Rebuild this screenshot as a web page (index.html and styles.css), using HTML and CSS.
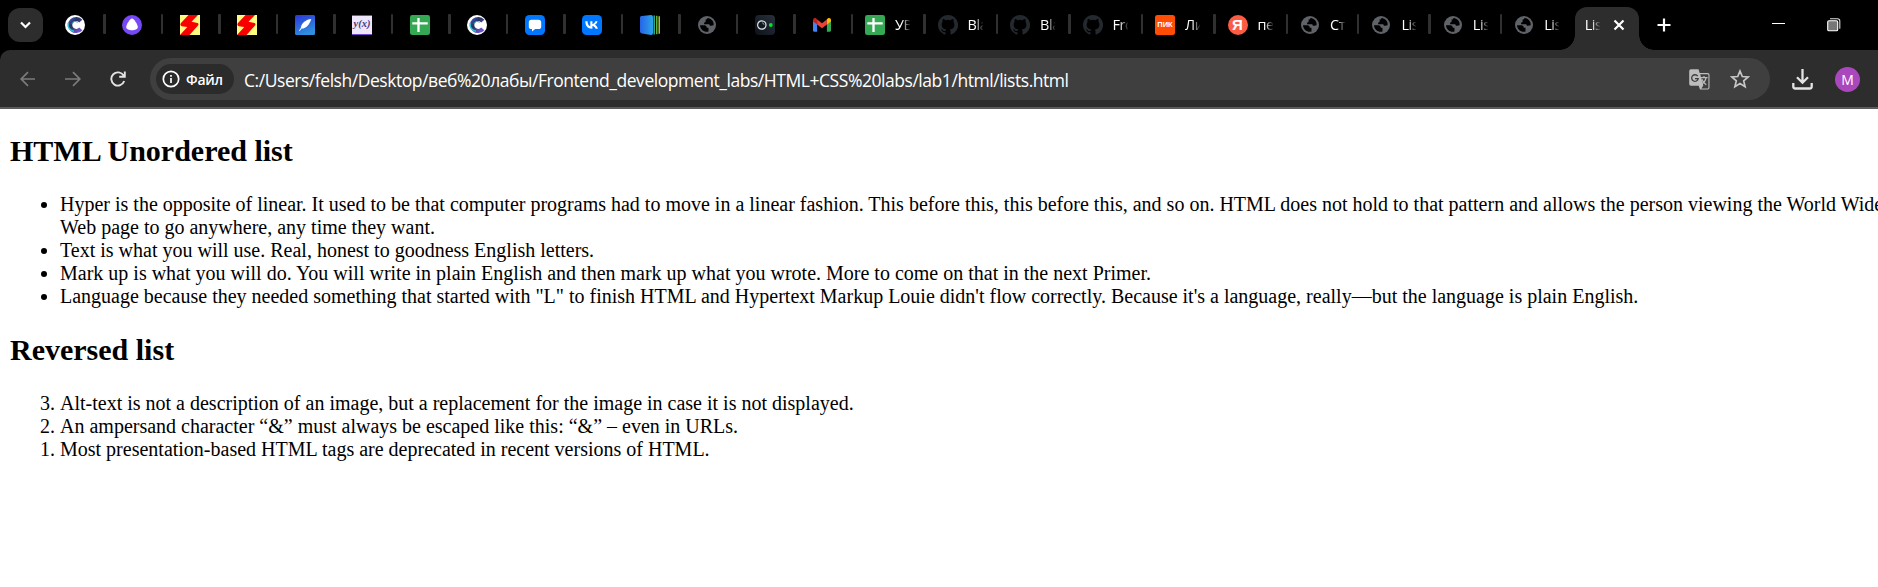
FILE: index.html
```html
<!DOCTYPE html>
<html lang="ru">
<head>
<meta charset="utf-8">
<title>Lists</title>
<link rel="stylesheet" href="styles.css">
</head>
<body>
<svg class="defs" aria-hidden="true">
  <defs>
    <linearGradient id="cg" x1="0" y1="0" x2="1" y2="1"><stop offset="0" stop-color="#3f4fae"/><stop offset=".35" stop-color="#27345f"/><stop offset=".7" stop-color="#564aa8"/><stop offset="1" stop-color="#7a55d8"/></linearGradient>
    <linearGradient id="feather" x1="0" y1="0" x2=".4" y2="1"><stop offset="0" stop-color="#2d35d8"/><stop offset="1" stop-color="#2e8edf"/></linearGradient>
    <linearGradient id="book" x1="0" y1="0" x2="1" y2="0"><stop offset="0" stop-color="#2864e8"/><stop offset="1" stop-color="#2ba4e8"/></linearGradient>
    <linearGradient id="cam" x1="0" y1="1" x2="1" y2="0"><stop offset="0" stop-color="#0d1119"/><stop offset="1" stop-color="#27323c"/></linearGradient>
  </defs>
  <symbol id="c-logo" viewBox="0 0 20 20"><circle cx="10" cy="10" r="10" fill="#fff"/><path d="M15.800 6.200A6 6 0 1 0 15.800 13.800" fill="none" stroke="url(#cg)" stroke-width="4.200"/><path d="M3.200 8A6.800 6.800 0 0 0 9 16.300" fill="none" stroke="#30c8d6" stroke-width="1.500"/><path d="M7 9a3.200 3.200 0 0 1 5.500-1.500" fill="none" stroke="#2fb5c8" stroke-width="1"/></symbol>
  <symbol id="alice" viewBox="0 0 20 20"><circle cx="10" cy="10" r="10" fill="#7748f5"/><path d="M10 3.600c2 0 5.800 6.200 5.800 8.500 0 2.500-3 3.200-5.800 3.200s-5.800-.7-5.800-3.200C4.200 9.800 8 3.600 10 3.600Z" fill="#fff"/></symbol>
  <symbol id="bolt" viewBox="0 0 20 20"><path fill="#fdfb80" d="M0 0h20v20H0z"/><path d="M8.500 0H18l-6.500 6.800 6 1.200q1.700.7.500 2.500L9.500 20H0l7.300-8-5.500-.8Q-.6 10.300 1 8Z" fill="#f80000"/></symbol>
  <symbol id="quill" viewBox="0 0 20 20"><rect width="20" height="20" rx="1.500" fill="url(#feather)"/><path d="M16.300 4c-5 .4-10 4-10.500 9L4 15.600l.7.4 2-2.400C11 13.800 14.600 9.500 16.300 4Z" fill="#fff"/></symbol>
  <symbol id="sheet" viewBox="0 0 20 20"><rect width="20" height="20" rx="2.300" fill="#34a853"/><path d="M2.300 8.300h15.400M8.500 3v14" stroke="#fff" stroke-width="2.300"/></symbol>
  <symbol id="chat" viewBox="0 0 20 20"><rect width="20" height="20" rx="4.500" fill="#07f"/><path d="M6.500 4.700h7a2.700 2.700 0 0 1 2.700 2.700v4a2.700 2.700 0 0 1-2.700 2.700h-3.300L7 16.400v-2.300h-.5a2.700 2.700 0 0 1-2.700-2.700v-4a2.700 2.700 0 0 1 2.700-2.700Z" fill="#fff"/></symbol>
  <symbol id="vk" viewBox="0 0 20 20"><rect width="20" height="20" rx="4.500" fill="#07f"/><path d="M3.300 6.200h2.200c.1 3.300 1.600 4.700 2.800 5V6.200h2.100V9c1.200-.1 2.500-1.400 3-2.800h2.100c-.4 1.700-1.600 3-2.600 3.600 1 .5 2.400 1.600 3 3.900H13.600c-.5-1.400-1.600-2.500-3.200-2.700v2.700H10.100C5.800 13.700 3.400 11 3.300 6.200Z" fill="#fff"/></symbol>
  <symbol id="books" viewBox="0 0 20 20"><path d="M0 2.500C0 1.300.8 1 2 .9L11 0q2 0 2 2v16q0 2-2 1.900L2 18.500Q0 18.200 0 16.500Z" fill="url(#book)"/><path d="M14.200.4v19.200" stroke="#35b890" stroke-width="1.400"/><path d="M16.800.7v18.600" stroke="#75cb48" stroke-width="1.300"/><path d="M19.200 1.200v17.600" stroke="#c4e63a" stroke-width="1.300"/></symbol>
  <symbol id="globe" viewBox="0 0 20 20"><circle cx="10" cy="10" r="9" fill="#5f6368"/><path d="M3 10.200h4.300c1.700 0 2.500 1 2.500 2.600h1.700v3.700c-4.200 1-8.200-1.800-8.500-6.300ZM10.500 3c-.3 1-.9 1.500-1.900 1.500v1.900c0 .7-.7 1-1.500 1v1.800h4.500c.9 0 1.200.7 1.200 1.500h1.200c1 0 1.700-.5 2.600-.5.600-3.600-2.300-7-6.100-7.200Z" fill="#000"/></symbol>
  <symbol id="camera" viewBox="0 0 20 20"><rect width="20" height="20" rx="4" fill="url(#cam)"/><circle cx="6.800" cy="10" r="4.200" fill="#111820" stroke="#dfe5e6" stroke-width="1.200"/><path d="M7 7.800a2 2 0 0 1 2 2" fill="none" stroke="#899"/><circle cx="15.800" cy="10" r="1.900" fill="#00e52c"/></symbol>
  <symbol id="gmail" viewBox="0 0 20 20"><path d="M1 5.500v10.100q0 1.100 1.100 1.100h3V8.500Z" fill="#4285f4"/><path d="M19 5.500v10.100q0 1.100-1.100 1.100h-3V8.500Z" fill="#34a853"/><path d="M14.900 4.500v5.100L19 6.500V5c0-2-2-2.600-3.300-1.600Z" fill="#fbbc04"/><path d="M5.100 9.600V4.500L10 8.200l4.900-3.700v5.100L10 13.300Z" fill="#ea4335"/><path d="M1 5v1.500l4.100 3.100V4.500l-.8-1.100C3 2.400 1 3 1 5Z" fill="#c5221f"/></symbol>
  <symbol id="github" viewBox="0 0 16 16"><path fill="#24292f" d="M8 0C3.580 0 0 3.580 0 8c0 3.540 2.290 6.530 5.470 7.590.4.070.55-.17.55-.38v-1.490c-2.010.37-2.530-.49-2.690-.94-.09-.23-.48-.94-.82-1.130-.28-.15-.68-.52-.01-.53.63-.01 1.080.58 1.230.82.72 1.210 1.870.87 2.330.66.070-.52.28-.87.51-1.070-1.780-.2-3.640-.89-3.640-3.950 0-.87.31-1.590.82-2.150-.08-.2-.36-1.020.08-2.120 0 0 .67-.21 2.200.82a7.600 7.600 0 0 1 4 0c1.530-1.040 2.200-.82 2.200-.82.44 1.100.16 1.920.08 2.120.51.56.82 1.270.82 2.150 0 3.070-1.870 3.750-3.650 3.950.29.25.54.73.54 1.480v2.200c0 .21.15.46.55.38A8 8 0 0 0 8 0Z"/></symbol>
</svg>

<header class="browser">
  <div class="tabstrip">
    <button class="tab-search"><svg viewBox="0 0 35 34"><path d="m13 14.500 4.500 4.500 4.500-4.500" fill="none" stroke="#fff" stroke-width="2.200"/></svg></button>
    <div class="tabs">
      <div class="tab"><svg><use href="#c-logo"/></svg></div>
      <div class="tab"><svg><use href="#alice"/></svg></div>
      <div class="tab"><svg><use href="#bolt"/></svg></div>
      <div class="tab"><svg><use href="#bolt"/></svg></div>
      <div class="tab"><svg><use href="#quill"/></svg></div>
      <div class="tab"><b class="favicon yx">y(x)</b></div>
      <div class="tab"><svg><use href="#sheet"/></svg></div>
      <div class="tab"><svg><use href="#c-logo"/></svg></div>
      <div class="tab"><svg><use href="#chat"/></svg></div>
      <div class="tab"><svg><use href="#vk"/></svg></div>
      <div class="tab"><svg><use href="#books"/></svg></div>
      <div class="tab"><svg><use href="#globe"/></svg></div>
      <div class="tab"><svg><use href="#camera"/></svg></div>
      <div class="tab"><svg><use href="#gmail"/></svg></div>
      <div class="tab wide"><svg><use href="#sheet"/></svg><span>УВ</span></div>
      <div class="tab wide"><svg><use href="#github"/></svg><span>Bla</span></div>
      <div class="tab wide"><svg><use href="#github"/></svg><span>Bla</span></div>
      <div class="tab wide"><svg><use href="#github"/></svg><span>Fro</span></div>
      <div class="tab wide"><b class="favicon pik">ПИК</b><span>Ли</span></div>
      <div class="tab wide"><b class="favicon ya">Я</b><span>пе</span></div>
      <div class="tab wide narrow"><svg><use href="#globe"/></svg><span>Ст</span></div>
      <div class="tab wide narrow"><svg><use href="#globe"/></svg><span>Lis</span></div>
      <div class="tab wide narrow"><svg><use href="#globe"/></svg><span>Lis</span></div>
      <div class="tab wide last"><svg><use href="#globe"/></svg><span>Lis</span></div>
    </div>
    <div class="tab-active"><span>Lis</span><svg viewBox="0 0 12 12"><path d="m1.500 1.500 9 9m0-9-9 9" stroke="#fff" stroke-width="2.200"/></svg></div>
    <svg class="new-tab" viewBox="0 0 14 14"><path d="M7 .5v13M.5 7h13" stroke="#fff" stroke-width="2.200"/></svg>
    <svg class="minimize" viewBox="0 0 13 14"><path d="M0 5.500h13" stroke="#fff"/></svg>
    <svg class="restore" viewBox="0 0 14 14"><rect x=".7" y="2.700" width="10" height="10" rx="1.300" fill="#777" stroke="#fff" stroke-width="1.100"/><path d="M3 .7h7.500a2.300 2.300 0 0 1 2.300 2.300v7.800" fill="none" stroke="#ddd" stroke-width="1.100"/></svg>
  </div>
  <div class="toolbar">
    <svg class="nav" viewBox="0 0 16 16"><path d="M15 8H1.500M8 1.200 1.200 8 8 14.800" fill="none" stroke="#7b7b7b" stroke-width="1.700"/></svg>
    <svg class="nav" viewBox="0 0 16 16"><path d="M0 8h14.500M8 1.200 14.800 8 8 14.800" fill="none" stroke="#7b7b7b" stroke-width="1.700"/></svg>
    <svg class="nav" viewBox="0 0 16 16"><path d="M14.200 10A6.600 6.600 0 1 1 13.600 4.600M14.800.5v5.300H9.200" fill="none" stroke="#e3e3e3" stroke-width="1.900"/></svg>
    <div class="omnibox">
      <div class="chip"><svg viewBox="0 0 18 18"><circle cx="9" cy="9" r="7.700" fill="none" stroke="#fff" stroke-width="1.700"/><path d="M9 8v5M9 5v1.700" stroke="#fff" stroke-width="1.700"/></svg><span>Файл</span></div>
      <span class="url">C:/Users/felsh/Desktop/веб%20лабы/Frontend_development_labs/HTML+CSS%20labs/lab1/html/lists.html</span>
      <svg class="translate" viewBox="0 0 21 21"><path d="M2 .2h7.500l1.200 3.900h8A1.800 1.800 0 0 1 20.500 6v12.800a1.800 1.800 0 0 1-1.800 1.800H11l-1.300-3.800H2A1.800 1.800 0 0 1 .2 15V2A1.800 1.800 0 0 1 2 .2Z" fill="#bdbdbd"/><path d="M11.200 5.300h7.600q.6 0 .6.700v12.700q0 .7-.7.700h-6.400l2-2.800Z" fill="#3f3f3f"/><path d="M8.700 7.200A3.300 3.300 0 1 0 9.200 9.700H6" fill="none" stroke="#3f3f3f" stroke-width="1.300"/><path d="M12 8.700h6.500M15 7v1.700m2 0c-.4 2.800-2 5-4.200 6.200m0-4.700c1.200 2.800 2.500 4.300 4.500 5.500" fill="none" stroke="#bdbdbd" stroke-width="1.200"/></svg>
      <svg class="star" viewBox="0 0 20 20"><path d="m10 2 2.300 5.500 5.900.5-4.500 3.900 1.400 5.800-5.100-3.100-5.100 3.100 1.400-5.800L1.800 8l5.900-.5Z" fill="none" stroke="#c7c7c7" stroke-width="1.700"/></svg>
    </div>
    <svg class="download" viewBox="0 0 21 21"><path d="M10.500 0v13M5 8.200l5.500 5.500L16 8.200M1.300 14v3.500a2 2 0 0 0 2 2h14.400a2 2 0 0 0 2-2V14" fill="none" stroke="#e3e3e3" stroke-width="2.300"/></svg>
    <div class="avatar">M</div>
  </div>
</header>

<main class="page">
  <h2>HTML Unordered list</h2>
  <ul>
    <li>Hyper is the opposite of linear. It used to be that computer programs had to move in a linear fashion. This before this, this before this, and so on. HTML does not hold to that pattern and allows the person viewing the World Wide Web page to go anywhere, any time they want.</li>
    <li>Text is what you will use. Real, honest to goodness English letters.</li>
    <li>Mark up is what you will do. You will write in plain English and then mark up what you wrote. More to come on that in the next Primer.</li>
    <li>Language because they needed something that started with "L" to finish HTML and Hypertext Markup Louie didn't flow correctly. Because it's a language, really—but the language is plain English.</li>
  </ul>
  <h2>Reversed list</h2>
  <ol reversed>
    <li>Alt-text is not a description of an image, but a replacement for the image in case it is not displayed.</li>
    <li>An ampersand character “&amp;” must always be escaped like this: “&amp;” – even in URLs.</li>
    <li>Most presentation-based HTML tags are deprecated in recent versions of HTML.</li>
  </ol>
</main>
</body>
</html>
```
FILE: styles.css
```css
* { box-sizing: border-box; }
body {
  margin: 0;
  height: 587px;
  overflow: hidden;
  background: #fff;
}
svg { display: block; flex: none; }
.defs { position: absolute; width: 0; height: 0; }

.browser {
  background: #000;
  color: #fff;
  font-family: "Open Sans", "Noto Sans", sans-serif;
}
.tabstrip {
  display: flex;
  align-items: center;
  height: 50px;
  padding-left: 8px;
}
.tab-search {
  width: 35px;
  height: 34px;
  padding: 0;
  border: 0;
  border-radius: 12px;
  background: #2d2d2d;
}
.tab-search svg { width: 35px; height: 34px; }
.tabs { display: flex; margin-left: 4px; }
.tab {
  display: flex;
  align-items: center;
  position: relative;
  width: 57.5px;
  height: 20px;
  padding-left: 17.5px;
}
.tab::after {
  content: "";
  position: absolute;
  right: -1px;
  top: -1px;
  width: 2.5px;
  height: 20px;
  border-radius: 1px;
  background: #303030;
}
.tab svg { width: 20px; height: 20px; }
.tab.wide { width: 72.5px; padding-left: 13px; }
.tab.narrow { width: 71.4px; }
.tab.last { width: 73.5px; }
.tab.last::after { display: none; }
.tab span, .tab-active span {
  width: 15px;
  overflow: hidden;
  white-space: nowrap;
  font-size: 14.5px;
  line-height: 20px;
  letter-spacing: -0.4px;
  -webkit-mask-image: linear-gradient(90deg, #000 45%, transparent 105%);
  mask-image: linear-gradient(90deg, #000 45%, transparent 105%);
}
.tab span { margin-left: 10px; }

.favicon {
  flex: none;
  width: 20px;
  height: 20px;
  text-align: center;
  white-space: nowrap;
}
.yx {
  border: solid #7445cf;
  border-width: 1px 0;
  background: #eee6fb;
  color: #4b3b78;
  font: italic bold 10.5px/16px "Liberation Serif", serif;
}
.pik {
  border-radius: 2.5px;
  background: #ff4d06;
  font: bold 7.5px/20px "Liberation Sans", sans-serif;
}
.ya {
  border-radius: 50%;
  background: #fc5c43;
  font: bold 15px/20px "Liberation Sans", sans-serif;
}

.tab-active {
  display: flex;
  align-items: center;
  align-self: flex-end;
  position: relative;
  width: 64px;
  height: 43px;
  padding: 0 0 7px 10px;
  border-radius: 12px 12px 0 0;
  background: #2d2d2d;
}
.tab-active::before, .tab-active::after {
  content: "";
  position: absolute;
  bottom: 0;
  width: 15px;
  height: 15px;
}
.tab-active::before { right: 100%; background: radial-gradient(circle at 0 0, transparent 14.5px, #2d2d2d 15px); }
.tab-active::after { left: 100%; background: radial-gradient(circle at 100% 0, transparent 14.5px, #2d2d2d 15px); }
.tab-active svg { width: 12px; height: 12px; margin-left: 13px; }
.new-tab { width: 14px; height: 14px; margin-left: 18px; }
.minimize { width: 13px; height: 14px; margin-left: auto; }
.restore { width: 14px; height: 14px; margin: 0 37px 0 42px; }

.toolbar {
  display: flex;
  align-items: center;
  height: 59px;
  padding: 1px 18px 0 20px;
  border-bottom: 2px solid #5c5c5c;
  border-radius: 10px 0 0 0;
  background: #2d2d2d;
}
.nav { width: 16px; height: 16px; margin-right: 29px; }
.omnibox {
  display: flex;
  align-items: center;
  width: 1620px;
  height: 42px;
  margin-left: -5px;
  padding: 0 20px 0 6px;
  border-radius: 21px;
  background: #3f3f3f;
}
.chip {
  display: flex;
  align-items: center;
  gap: 6px;
  width: 78px;
  height: 30px;
  padding-left: 6px;
  border-radius: 15px;
  background: #2b2b2b;
  font-size: 14px;
  font-weight: 600;
  letter-spacing: -0.2px;
}
.chip svg { width: 18px; height: 18px; }
.url {
  margin-left: 10px;
  padding-top: 1px;
  font-size: 17.5px;
  line-height: 24px;
  letter-spacing: -0.45px;
  white-space: nowrap;
}
.translate { width: 21px; height: 21px; margin-left: auto; }
.star { width: 20px; height: 20px; margin-left: 20px; }
.download { width: 21px; height: 21px; margin-left: 22px; }
.avatar {
  width: 25px;
  height: 25px;
  margin-left: auto;
  border-radius: 50%;
  background: #ab47bc;
  font-size: 14px;
  line-height: 25px;
  text-align: center;
}

.page {
  width: 1904px;
  padding: 0 10px;
  overflow: hidden;
  color: #000;
  font: 20px/23px "Liberation Serif", "Times New Roman", serif;
}
.page h2 { margin: 25px 0; font-size: 30px; line-height: 34px; }
.page ul, .page ol { margin: 25px 0; padding-left: 50px; }
```
